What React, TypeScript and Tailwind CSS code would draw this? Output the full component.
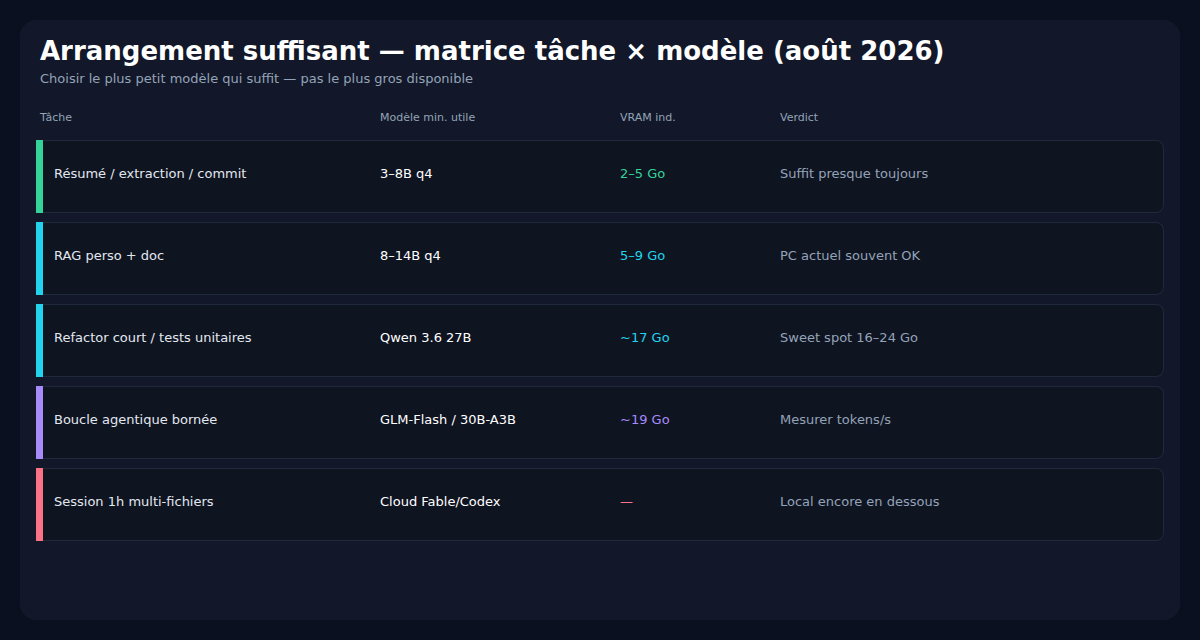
const rows = [
  {
    task: "Résumé / extraction / commit",
    model: "3–8B q4",
    vram: "2–5 Go",
    verdict: "Suffit presque toujours",
    bar: "bg-[#34d399]",
    text: "text-[#34d399]",
  },
  {
    task: "RAG perso + doc",
    model: "8–14B q4",
    vram: "5–9 Go",
    verdict: "PC actuel souvent OK",
    bar: "bg-[#22d3ee]",
    text: "text-[#22d3ee]",
  },
  {
    task: "Refactor court / tests unitaires",
    model: "Qwen 3.6 27B",
    vram: "~17 Go",
    verdict: "Sweet spot 16–24 Go",
    bar: "bg-[#22d3ee]",
    text: "text-[#22d3ee]",
  },
  {
    task: "Boucle agentique bornée",
    model: "GLM-Flash / 30B-A3B",
    vram: "~19 Go",
    verdict: "Mesurer tokens/s",
    bar: "bg-[#a78bfa]",
    text: "text-[#a78bfa]",
  },
  {
    task: "Session 1h multi-fichiers",
    model: "Cloud Fable/Codex",
    vram: "—",
    verdict: "Local encore en dessous",
    bar: "bg-[#fb7185]",
    text: "text-[#fb7185]",
  },
]

export default function App() {
  return (
    <div className="h-[640px] w-[1200px] bg-[#0b1020] p-5 font-['DejaVu_Sans',sans-serif]">
      <div className="h-full rounded-2xl bg-[#121829] pt-[15px]">
        <h1 className="px-5 text-[26px] leading-[32px] font-bold text-white">
          Arrangement suffisant — matrice tâche × modèle (août 2026)
        </h1>
        <p className="mt-[3px] px-5 text-[13px] leading-[18px] text-[#94a3b8]">
          Choisir le plus petit modèle qui suffit — pas le plus gros disponible
        </p>

        <div className="mt-[23px] grid grid-cols-[340px_240px_160px_1fr] px-5 text-[11px] leading-[14px] text-[#94a3b8]">
          <span>Tâche</span>
          <span>Modèle min. utile</span>
          <span>VRAM ind.</span>
          <span>Verdict</span>
        </div>

        <div className="mt-[15px] flex flex-col gap-[9px] px-4">
          {rows.map((row) => (
            <div key={row.task} className="flex h-[73px]">
              <div className={`w-[7px] shrink-0 ${row.bar}`} />
              <div className="grid flex-1 grid-cols-[326px_240px_160px_1fr] items-center rounded-r-lg border-y border-r border-[#1e293b] bg-[#0f1421] pb-[6px] pl-[11px] text-[13px] leading-[18px]">
                <span className="text-[#e2e8f0]">{row.task}</span>
                <span className="text-white">{row.model}</span>
                <span className={row.text}>{row.vram}</span>
                <span className="text-[#94a3b8]">{row.verdict}</span>
              </div>
            </div>
          ))}
        </div>
      </div>
    </div>
  )
}
